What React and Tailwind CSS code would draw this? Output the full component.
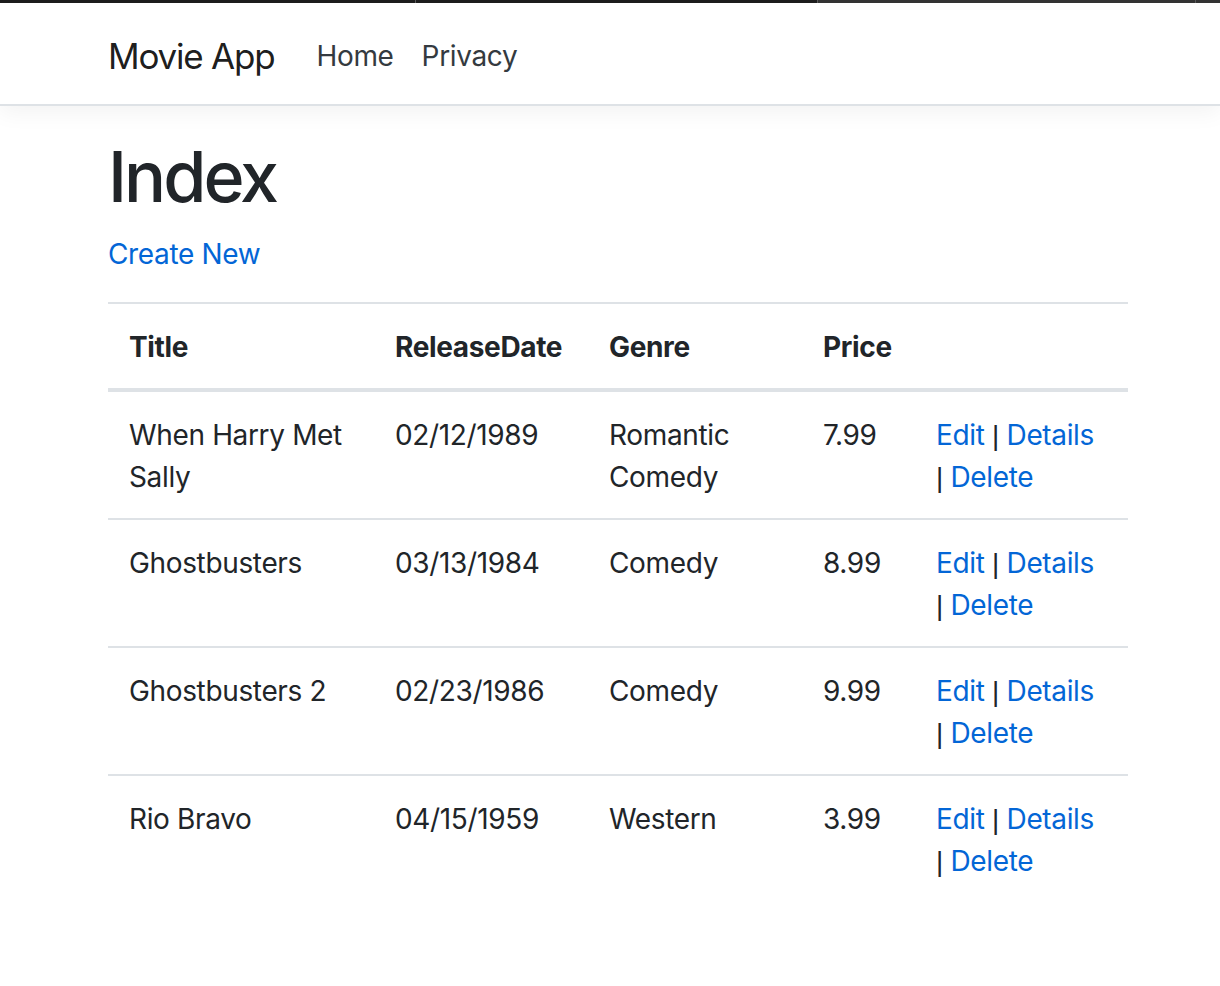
import React from 'react';

const movies = [
  { title: 'When Harry Met Sally', date: '02/12/1989', genre: 'Romantic Comedy', price: '7.99' },
  { title: 'Ghostbusters', date: '03/13/1984', genre: 'Comedy', price: '8.99' },
  { title: 'Ghostbusters 2', date: '02/23/1986', genre: 'Comedy', price: '9.99' },
  { title: 'Rio Bravo', date: '04/15/1959', genre: 'Western', price: '3.99' },
];

const font = { fontFamily: 'Inter, "Liberation Sans", sans-serif' };

const Pipe = () => <span className="font-['Liberation_Sans'] leading-[0] text-[#212529]">|</span>;

export default function App() {
  return (
    <div className="min-h-[986px] bg-white text-[28px] leading-[42px] tracking-[-0.35px] text-[#212529]" style={font}>
      {/* window chrome strip */}
      <div className="flex h-[3px] bg-[#1e1e1e]">
        <div className="w-[416px] border-r border-[#5a5a5a]" />
        <div className="w-[402px] border-r border-[#5a5a5a]" />
        <div className="w-[378px] border-r border-[#5a5a5a] bg-[#333]" />
        <div className="flex-1 bg-[#333]" />
      </div>

      {/* Navbar */}
      <header className="border-b-2 border-[#dee2e6] bg-white shadow-[0_7px_21px_rgba(0,0,0,0.05)]">
        <nav className="ml-[108px] flex h-[101px] items-center pt-[4px]">
          <a className="mr-[28px] text-[35px] leading-[52px] tracking-[-1.2px] text-[#000000e6]">Movie App</a>
          <ul className="flex">
            <li className="px-[14px] text-[#343a40]">Home</li>
            <li className="px-[14px] text-[#343a40]">Privacy</li>
          </ul>
        </nav>
      </header>

      <main className="ml-[108px] w-[1020px] pt-[29px]">
        <h1 className="mb-[14px] text-[70px] font-medium leading-[84px] tracking-[-3px]">Index</h1>
        <p className="mb-[27px]">
          <a className="text-[#0366d6]">Create New</a>
        </p>

        <table className="w-full table-fixed border-separate border-spacing-0">
          <thead>
            <tr>
              <th className="w-[266px] border-y-2 border-b-4 border-[#dee2e6] px-[21px] pt-[22px] pb-[20px] text-left align-bottom font-bold">Title</th>
              <th className="w-[214px] border-y-2 border-b-4 border-[#dee2e6] px-[21px] pt-[22px] pb-[20px] text-left align-bottom font-bold">ReleaseDate</th>
              <th className="w-[214px] border-y-2 border-b-4 border-[#dee2e6] px-[21px] pt-[22px] pb-[20px] text-left align-bottom font-bold">Genre</th>
              <th className="w-[113px] border-y-2 border-b-4 border-[#dee2e6] px-[21px] pt-[22px] pb-[20px] text-left align-bottom font-bold">Price</th>
              <th className="w-[213px] border-y-2 border-b-4 border-[#dee2e6] px-[21px] pt-[22px] pb-[20px] text-left align-bottom font-bold"></th>
            </tr>
          </thead>
          <tbody>
            {movies.map((m, i) => {
              const cell = i < movies.length - 1 ? 'border-b-2 border-[#dee2e6] px-[21px] pt-[22px] pb-[20px] align-top' : 'px-[21px] pt-[22px] pb-[20px] align-top';
              return (
                <tr key={m.title}>
                  <td className={cell}>{m.title}</td>
                  <td className={cell}>{m.date}</td>
                  <td className={cell}>{m.genre}</td>
                  <td className={cell}>{m.price}</td>
                  <td className={cell}>
                    <a className="text-[#0366d6]">Edit</a> <Pipe /> <a className="text-[#0366d6]">Details</a>{' '}
                    <Pipe /> <a className="text-[#0366d6]">Delete</a>
                  </td>
                </tr>
              );
            })}
          </tbody>
        </table>
      </main>
    </div>
  );
}
